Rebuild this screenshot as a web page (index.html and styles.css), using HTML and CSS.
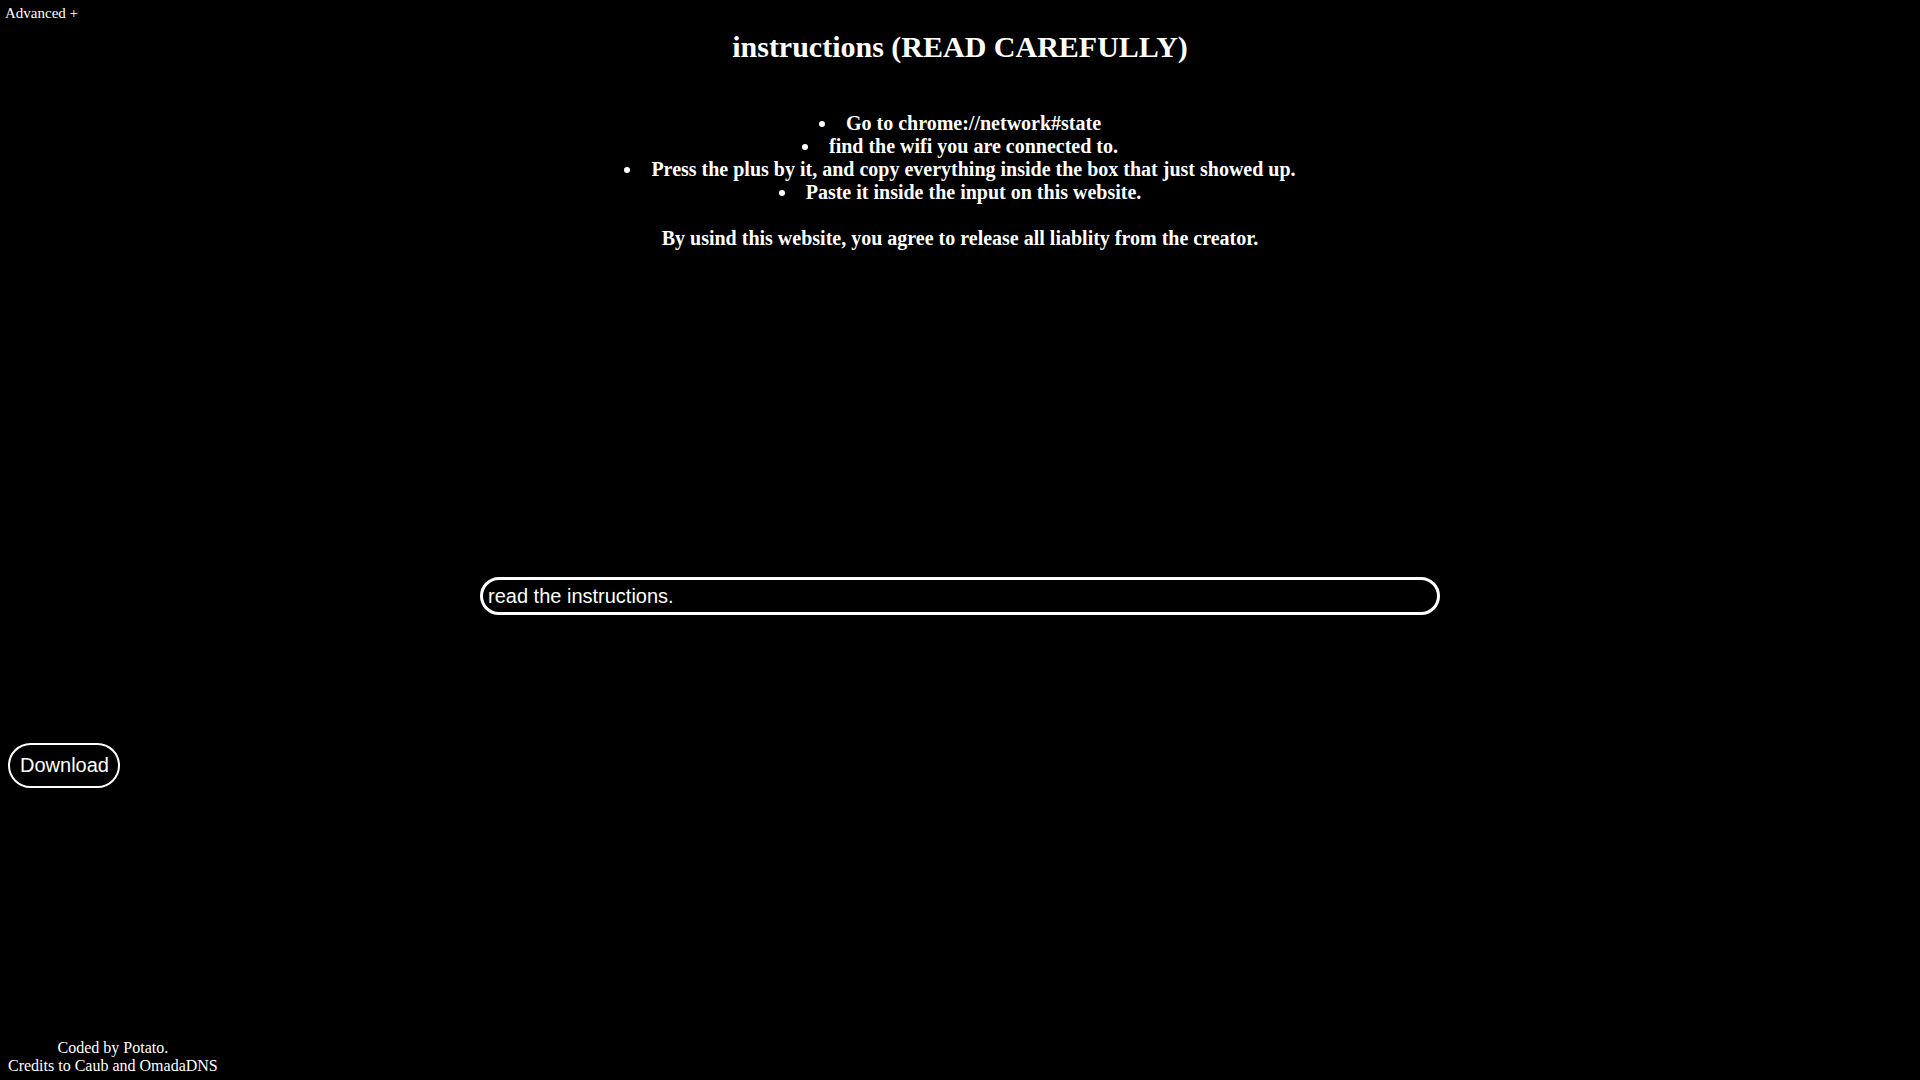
FILE: index.html
```html
<!DOCTYPE html>
<html lang="en">
<head>
<meta charset="utf-8">
<title>Instructions</title>
<link rel="stylesheet" href="styles.css">
</head>
<body>
<div class="page">
  <span class="advanced">Advanced +</span>
  <h1 class="title">instructions (READ CAREFULLY)</h1>
  <ul class="steps">
    <li>Go to chrome://network#state</li>
    <li>find the wifi you are connected to.</li>
    <li>Press the plus by it, and copy everything inside the box that just showed up.</li>
    <li>Paste it inside the input on this website.</li>
  </ul>
  <p class="disclaimer">By usind this website, you agree to release all liablity from the creator.</p>
  <input class="field" type="text" placeholder="read the instructions.">
  <button class="download" type="button">Download</button>
  <footer class="credits">Coded by Potato.<br>Credits to Caub and OmadaDNS</footer>
</div>
</body>
</html>
```
FILE: styles.css
```css
html, body {
  margin: 0;
  padding: 0;
  background: #000;
  color: #fff;
  font-family: "Liberation Serif", "Times New Roman", serif;
  font-size: 16px;
}

.page {
  position: relative;
  min-height: 100vh;
  box-sizing: border-box;
  display: flex;
  flex-direction: column;
  padding-bottom: 5px;
}

.advanced {
  position: absolute;
  top: 5px;
  left: 5px;
  font-size: 15px;
  color: #fff;
  cursor: pointer;
}

.title {
  margin: 30px 0 0;
  font-size: 30px;
  font-weight: bold;
  text-align: center;
}

.steps {
  margin: 48px 0 0;
  padding: 0;
  list-style-position: inside;
  text-align: center;
  font-size: 20px;
  font-weight: bold;
}

.disclaimer {
  margin: 23px 0 0;
  text-align: center;
  font-size: 20px;
  font-weight: bold;
}

.field {
  align-self: center;
  width: 960px;
  height: 38px;
  box-sizing: border-box;
  margin: 327px 0 0;
  padding: 0 5px;
  border: 3px solid #fff;
  border-radius: 20px;
  background: #000;
  color: #fff;
  font-family: "Liberation Sans", Arial, sans-serif;
  font-size: 20px;
  outline: none;
}

.field::placeholder {
  color: #fff;
  opacity: 1;
}

.download {
  align-self: flex-start;
  margin: 128px 0 0 8px;
  height: 45px;
  box-sizing: border-box;
  padding: 0 9px 0 10px;
  border: 2px solid #fff;
  border-radius: 23px;
  background: #000;
  color: #fff;
  font-family: "Liberation Sans", Arial, sans-serif;
  font-size: 20px;
  cursor: pointer;
}

.credits {
  align-self: flex-start;
  margin: auto 0 0 8px;
  text-align: center;
  font-size: 16px;
}
```
